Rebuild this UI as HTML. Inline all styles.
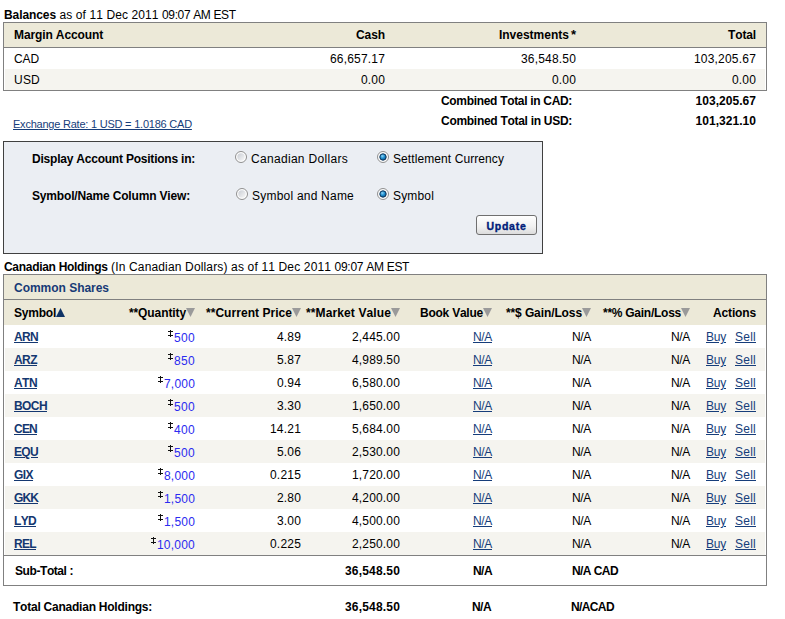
<!DOCTYPE html>
<html><head><meta charset="utf-8"><style>
html,body{margin:0;padding:0;background:#fff;width:785px;height:619px;overflow:hidden;position:relative}
body{font-family:"Liberation Sans",sans-serif;font-size:12px;color:#000;font-kerning:none}
.t{position:absolute;white-space:nowrap;line-height:14px;font-size:12px}
.b{position:absolute}
.lk{color:#163d7a}
.sym{color:#143770}
.cs{color:#173a76}
.q{color:#2b2bf0}
.dg{display:inline-block;vertical-align:5px;fill:#111}
.tri{display:inline-block;vertical-align:0px}
.btn{position:absolute;box-sizing:border-box;border:1px solid #6f6f6f;border-radius:3px;background:linear-gradient(#ffffff,#f0f0f0 60%,#dcdcdc);font:bold 10.5px/18px "Liberation Sans",sans-serif;padding-top:1px;color:#00207a;text-align:center;letter-spacing:0.75px;-webkit-text-stroke:0.35px #00207a}
</style></head><body>
<svg width="0" height="0" style="position:absolute"><defs>
<linearGradient id="rg" x1="0" y1="0" x2="1" y2="1"><stop offset="0" stop-color="#c9cdd4"/><stop offset="1" stop-color="#f8f8f8"/></linearGradient>
<radialGradient id="rd" cx="0.4" cy="0.35" r="0.7"><stop offset="0" stop-color="#8fd3f5"/><stop offset="0.5" stop-color="#1d8fd0"/><stop offset="1" stop-color="#0e4f86"/></radialGradient>
</defs></svg>
<div class="t" style="left:4px;top:8px;"><span style="letter-spacing:-0.086px;font-weight:bold;">Balances</span><span style="letter-spacing:0.104px;"> as of 11 Dec 2011 </span><span style="letter-spacing:-0.375px;">09:07 AM EST</span></div>
<div class="b" style="left:3px;top:22px;width:764px;height:69px;border:1px solid #808080;box-sizing:border-box;background:#fff"></div>
<div class="b" style="left:4px;top:23px;width:762px;height:24px;background:#ece9d8"></div>
<div class="b" style="left:4px;top:47px;width:762px;height:1px;background:#808080"></div>
<div class="b" style="left:5px;top:69px;width:760px;height:21px;background:#f5f4ef"></div>
<div class="t" style="left:14px;top:28px;"><span style="letter-spacing:-0.118px;font-weight:bold;">Margin Account</span></div>
<div class="t" style="right:400px;top:28px;"><span style="letter-spacing:-0.086px;font-weight:bold;">Cash</span></div>
<div class="t" style="right:209px;top:28px;"><span style="letter-spacing:-0.001px;font-weight:bold;">Investments</span><span style="font-weight:bold;font-size:13px;margin-left:2px">*</span></div>
<div class="t" style="right:29px;top:28px;"><span style="letter-spacing:-0.131px;font-weight:bold;">Total</span></div>
<div class="t" style="left:14px;top:52px;"><span style="letter-spacing:-0.115px;">CAD</span></div>
<div class="t" style="right:400px;top:52px;"><span style="letter-spacing:0.182px;">66,657.17</span></div>
<div class="t" style="right:209px;top:52px;"><span style="letter-spacing:0.182px;">36,548.50</span></div>
<div class="t" style="right:29px;top:52px;"><span style="letter-spacing:0.197px;">103,205.67</span></div>
<div class="t" style="left:14px;top:73px;"><span style="letter-spacing:0.219px;">USD</span></div>
<div class="t" style="right:400px;top:73px;"><span style="letter-spacing:0.164px;">0.00</span></div>
<div class="t" style="right:209px;top:73px;"><span style="letter-spacing:0.164px;">0.00</span></div>
<div class="t" style="right:29px;top:73px;"><span style="letter-spacing:0.164px;">0.00</span></div>
<div class="t" style="left:441px;top:94px;"><span style="letter-spacing:-0.317px;font-weight:bold;">Combined Total in CAD:</span></div>
<div class="t" style="right:29px;top:94px;"><span style="letter-spacing:0.047px;font-weight:bold;">103,205.67</span></div>
<div class="t" style="left:441px;top:114px;"><span style="letter-spacing:-0.286px;font-weight:bold;">Combined Total in USD:</span></div>
<div class="t" style="right:29px;top:114px;"><span style="letter-spacing:0.047px;font-weight:bold;">101,321.10</span></div>
<div class="t lk" style="left:13px;top:117px;"><u style="letter-spacing:-0.222px;font-size:11px;">Exchange Rate: 1 USD = 1.0186 CAD</u></div>
<div class="b" style="left:3px;top:141px;width:540px;height:113px;border:1px solid #404040;box-sizing:border-box;background:#ebeef3"></div>
<div class="t" style="left:32px;top:152px;"><span style="letter-spacing:-0.217px;font-weight:bold;">Display Account Positions in:</span></div>
<div class="t" style="left:32px;top:189px;"><span style="letter-spacing:-0.166px;font-weight:bold;">Symbol/Name Column View:</span></div>
<svg class="b" style="left:235px;top:151px" width="12" height="12" viewBox="0 0 12 12"><circle cx="6" cy="6" r="5.5" fill="#fdfdfd" stroke="#8f8f8f" stroke-width="1"/><circle cx="6" cy="6" r="3.7" fill="url(#rg)"/></svg>
<div class="t" style="left:251px;top:152px;"><span style="letter-spacing:0.309px;">Canadian Dollars</span></div>
<svg class="b" style="left:377px;top:151px" width="12" height="12" viewBox="0 0 12 12"><circle cx="6" cy="6" r="5.5" fill="#fdfdfd" stroke="#8f8f8f" stroke-width="1"/><circle cx="6" cy="6" r="3.2" fill="url(#rd)" stroke="#0d3257" stroke-width="1"/></svg>
<div class="t" style="left:393px;top:152px;"><span style="letter-spacing:0.086px;">Settlement Currency</span></div>
<svg class="b" style="left:236px;top:188px" width="12" height="12" viewBox="0 0 12 12"><circle cx="6" cy="6" r="5.5" fill="#fdfdfd" stroke="#8f8f8f" stroke-width="1"/><circle cx="6" cy="6" r="3.7" fill="url(#rg)"/></svg>
<div class="t" style="left:252px;top:189px;"><span style="letter-spacing:0.220px;">Symbol and Name</span></div>
<svg class="b" style="left:377px;top:188px" width="12" height="12" viewBox="0 0 12 12"><circle cx="6" cy="6" r="5.5" fill="#fdfdfd" stroke="#8f8f8f" stroke-width="1"/><circle cx="6" cy="6" r="3.2" fill="url(#rd)" stroke="#0d3257" stroke-width="1"/></svg>
<div class="t" style="left:393px;top:189px;"><span style="letter-spacing:0.164px;">Symbol</span></div>
<div class="btn" style="left:476px;top:215px;width:61px;height:20px">Update</div>
<div class="t" style="left:4px;top:260px;"><span style="letter-spacing:-0.302px;font-weight:bold;">Canadian Holdings</span><span style="letter-spacing:0.153px;"> (In Canadian Dollars) as of 11 Dec 2011 </span><span style="letter-spacing:-0.292px;">09:07 AM EST</span></div>
<div class="b" style="left:3px;top:274px;width:764px;height:312px;border:1px solid #808080;box-sizing:border-box;background:#fff"></div>
<div class="b" style="left:4px;top:275px;width:762px;height:24px;background:#ece9d8"></div>
<div class="b" style="left:4px;top:299px;width:762px;height:1px;background:#808080"></div>
<div class="b" style="left:4px;top:300px;width:762px;height:25px;background:#ece9d8"></div>
<div class="t cs" style="left:14px;top:281px;"><span style="letter-spacing:-0.026px;font-weight:bold;">Common Shares</span></div>
<div class="t" style="left:14px;top:306px;"><span style="letter-spacing:-0.221px;font-weight:bold;">Symbol</span><svg class="tri" width="9" height="9" viewBox="0 0 9 9"><path d="M0 9H9L4.5 0Z" fill="#0f3366"/></svg></div>
<div class="t" style="right:590px;top:306px;"><span style="letter-spacing:-0.100px;font-weight:bold;">**Quantity</span><svg class="tri" width="9" height="9" viewBox="0 0 9 9"><path d="M0 0H9L4.5 9Z" fill="#9a9a9a"/></svg></div>
<div class="t" style="right:484px;top:306px;"><span style="letter-spacing:0.043px;font-weight:bold;">**Current Price</span><svg class="tri" width="9" height="9" viewBox="0 0 9 9"><path d="M0 0H9L4.5 9Z" fill="#9a9a9a"/></svg></div>
<div class="t" style="right:385px;top:306px;"><span style="letter-spacing:0.117px;font-weight:bold;">**Market Value</span><svg class="tri" width="9" height="9" viewBox="0 0 9 9"><path d="M0 0H9L4.5 9Z" fill="#9a9a9a"/></svg></div>
<div class="t" style="right:293px;top:306px;"><span style="letter-spacing:-0.233px;font-weight:bold;">Book Value</span><svg class="tri" width="9" height="9" viewBox="0 0 9 9"><path d="M0 0H9L4.5 9Z" fill="#9a9a9a"/></svg></div>
<div class="t" style="right:194px;top:306px;"><span style="letter-spacing:-0.102px;font-weight:bold;">**$ Gain/Loss</span><svg class="tri" width="9" height="9" viewBox="0 0 9 9"><path d="M0 0H9L4.5 9Z" fill="#9a9a9a"/></svg></div>
<div class="t" style="right:95px;top:306px;"><span style="letter-spacing:-0.256px;font-weight:bold;">**% Gain/Loss</span><svg class="tri" width="9" height="9" viewBox="0 0 9 9"><path d="M0 0H9L4.5 9Z" fill="#9a9a9a"/></svg></div>
<div class="t" style="right:29px;top:306px;"><span style="letter-spacing:-0.143px;font-weight:bold;">Actions</span></div>
<div class="t sym" style="left:14px;top:330px;"><u style="letter-spacing:-0.672px;font-weight:bold;">ARN</u></div>
<div class="t" style="right:590px;top:330px;"><svg class="dg" width="6" height="7" viewBox="0 0 6 7"><rect x="2" y="0" width="1" height="7"/><rect x="0" y="1" width="5" height="1"/><rect x="0" y="5" width="5" height="1"/></svg><span class="q" style="letter-spacing:0.328px;">500</span></div>
<div class="t" style="right:484px;top:330px;"><span style="letter-spacing:0.164px;">4.89</span></div>
<div class="t" style="right:385px;top:330px;"><span style="letter-spacing:0.164px;">2,445.00</span></div>
<div class="t lk" style="right:293px;top:330px;"><u style="letter-spacing:-0.333px;">N/A</u></div>
<div class="t" style="right:194px;top:330px;"><span style="letter-spacing:-0.333px;">N/A</span></div>
<div class="t" style="right:95px;top:330px;"><span style="letter-spacing:-0.333px;">N/A</span></div>
<div class="t lk" style="left:706px;top:330px;"><u style="letter-spacing:-0.224px;">Buy</u></div>
<div class="t lk" style="right:29px;top:330px;"><u style="letter-spacing:0.246px;">Sell</u></div>
<div class="b" style="left:5px;top:348px;width:760px;height:23px;background:#f5f4ef"></div>
<div class="t sym" style="left:14px;top:353px;"><u style="letter-spacing:-0.557px;font-weight:bold;">ARZ</u></div>
<div class="t" style="right:590px;top:353px;"><svg class="dg" width="6" height="7" viewBox="0 0 6 7"><rect x="2" y="0" width="1" height="7"/><rect x="0" y="1" width="5" height="1"/><rect x="0" y="5" width="5" height="1"/></svg><span class="q" style="letter-spacing:0.328px;">850</span></div>
<div class="t" style="right:484px;top:353px;"><span style="letter-spacing:0.164px;">5.87</span></div>
<div class="t" style="right:385px;top:353px;"><span style="letter-spacing:0.164px;">4,989.50</span></div>
<div class="t lk" style="right:293px;top:353px;"><u style="letter-spacing:-0.333px;">N/A</u></div>
<div class="t" style="right:194px;top:353px;"><span style="letter-spacing:-0.333px;">N/A</span></div>
<div class="t" style="right:95px;top:353px;"><span style="letter-spacing:-0.333px;">N/A</span></div>
<div class="t lk" style="left:706px;top:353px;"><u style="letter-spacing:-0.224px;">Buy</u></div>
<div class="t lk" style="right:29px;top:353px;"><u style="letter-spacing:0.246px;">Sell</u></div>
<div class="t sym" style="left:14px;top:376px;"><u style="letter-spacing:-0.557px;font-weight:bold;">ATN</u></div>
<div class="t" style="right:590px;top:376px;"><svg class="dg" width="6" height="7" viewBox="0 0 6 7"><rect x="2" y="0" width="1" height="7"/><rect x="0" y="1" width="5" height="1"/><rect x="0" y="5" width="5" height="1"/></svg><span class="q" style="letter-spacing:0.197px;">7,000</span></div>
<div class="t" style="right:484px;top:376px;"><span style="letter-spacing:0.164px;">0.94</span></div>
<div class="t" style="right:385px;top:376px;"><span style="letter-spacing:0.164px;">6,580.00</span></div>
<div class="t lk" style="right:293px;top:376px;"><u style="letter-spacing:-0.333px;">N/A</u></div>
<div class="t" style="right:194px;top:376px;"><span style="letter-spacing:-0.333px;">N/A</span></div>
<div class="t" style="right:95px;top:376px;"><span style="letter-spacing:-0.333px;">N/A</span></div>
<div class="t lk" style="left:706px;top:376px;"><u style="letter-spacing:-0.224px;">Buy</u></div>
<div class="t lk" style="right:29px;top:376px;"><u style="letter-spacing:0.246px;">Sell</u></div>
<div class="b" style="left:5px;top:394px;width:760px;height:23px;background:#f5f4ef"></div>
<div class="t sym" style="left:14px;top:399px;"><u style="letter-spacing:-0.586px;font-weight:bold;">BOCH</u></div>
<div class="t" style="right:590px;top:399px;"><svg class="dg" width="6" height="7" viewBox="0 0 6 7"><rect x="2" y="0" width="1" height="7"/><rect x="0" y="1" width="5" height="1"/><rect x="0" y="5" width="5" height="1"/></svg><span class="q" style="letter-spacing:0.328px;">500</span></div>
<div class="t" style="right:484px;top:399px;"><span style="letter-spacing:0.164px;">3.30</span></div>
<div class="t" style="right:385px;top:399px;"><span style="letter-spacing:0.164px;">1,650.00</span></div>
<div class="t lk" style="right:293px;top:399px;"><u style="letter-spacing:-0.333px;">N/A</u></div>
<div class="t" style="right:194px;top:399px;"><span style="letter-spacing:-0.333px;">N/A</span></div>
<div class="t" style="right:95px;top:399px;"><span style="letter-spacing:-0.333px;">N/A</span></div>
<div class="t lk" style="left:706px;top:399px;"><u style="letter-spacing:-0.224px;">Buy</u></div>
<div class="t lk" style="right:29px;top:399px;"><u style="letter-spacing:0.246px;">Sell</u></div>
<div class="t sym" style="left:14px;top:422px;"><u style="letter-spacing:-0.781px;font-weight:bold;">CEN</u></div>
<div class="t" style="right:590px;top:422px;"><svg class="dg" width="6" height="7" viewBox="0 0 6 7"><rect x="2" y="0" width="1" height="7"/><rect x="0" y="1" width="5" height="1"/><rect x="0" y="5" width="5" height="1"/></svg><span class="q" style="letter-spacing:0.328px;">400</span></div>
<div class="t" style="right:484px;top:422px;"><span style="letter-spacing:0.197px;">14.21</span></div>
<div class="t" style="right:385px;top:422px;"><span style="letter-spacing:0.164px;">5,684.00</span></div>
<div class="t lk" style="right:293px;top:422px;"><u style="letter-spacing:-0.333px;">N/A</u></div>
<div class="t" style="right:194px;top:422px;"><span style="letter-spacing:-0.333px;">N/A</span></div>
<div class="t" style="right:95px;top:422px;"><span style="letter-spacing:-0.333px;">N/A</span></div>
<div class="t lk" style="left:706px;top:422px;"><u style="letter-spacing:-0.224px;">Buy</u></div>
<div class="t lk" style="right:29px;top:422px;"><u style="letter-spacing:0.246px;">Sell</u></div>
<div class="b" style="left:5px;top:440px;width:760px;height:23px;background:#f5f4ef"></div>
<div class="t sym" style="left:14px;top:445px;"><u style="letter-spacing:-0.667px;font-weight:bold;">EQU</u></div>
<div class="t" style="right:590px;top:445px;"><svg class="dg" width="6" height="7" viewBox="0 0 6 7"><rect x="2" y="0" width="1" height="7"/><rect x="0" y="1" width="5" height="1"/><rect x="0" y="5" width="5" height="1"/></svg><span class="q" style="letter-spacing:0.328px;">500</span></div>
<div class="t" style="right:484px;top:445px;"><span style="letter-spacing:0.164px;">5.06</span></div>
<div class="t" style="right:385px;top:445px;"><span style="letter-spacing:0.164px;">2,530.00</span></div>
<div class="t lk" style="right:293px;top:445px;"><u style="letter-spacing:-0.333px;">N/A</u></div>
<div class="t" style="right:194px;top:445px;"><span style="letter-spacing:-0.333px;">N/A</span></div>
<div class="t" style="right:95px;top:445px;"><span style="letter-spacing:-0.333px;">N/A</span></div>
<div class="t lk" style="left:706px;top:445px;"><u style="letter-spacing:-0.224px;">Buy</u></div>
<div class="t lk" style="right:29px;top:445px;"><u style="letter-spacing:0.246px;">Sell</u></div>
<div class="t sym" style="left:14px;top:468px;"><u style="letter-spacing:-0.552px;font-weight:bold;">GIX</u></div>
<div class="t" style="right:590px;top:468px;"><svg class="dg" width="6" height="7" viewBox="0 0 6 7"><rect x="2" y="0" width="1" height="7"/><rect x="0" y="1" width="5" height="1"/><rect x="0" y="5" width="5" height="1"/></svg><span class="q" style="letter-spacing:0.197px;">8,000</span></div>
<div class="t" style="right:484px;top:468px;"><span style="letter-spacing:0.197px;">0.215</span></div>
<div class="t" style="right:385px;top:468px;"><span style="letter-spacing:0.164px;">1,720.00</span></div>
<div class="t lk" style="right:293px;top:468px;"><u style="letter-spacing:-0.333px;">N/A</u></div>
<div class="t" style="right:194px;top:468px;"><span style="letter-spacing:-0.333px;">N/A</span></div>
<div class="t" style="right:95px;top:468px;"><span style="letter-spacing:-0.333px;">N/A</span></div>
<div class="t lk" style="left:706px;top:468px;"><u style="letter-spacing:-0.224px;">Buy</u></div>
<div class="t lk" style="right:29px;top:468px;"><u style="letter-spacing:0.246px;">Sell</u></div>
<div class="b" style="left:5px;top:486px;width:760px;height:23px;background:#f5f4ef"></div>
<div class="t sym" style="left:14px;top:491px;"><u style="letter-spacing:-0.891px;font-weight:bold;">GKK</u></div>
<div class="t" style="right:590px;top:491px;"><svg class="dg" width="6" height="7" viewBox="0 0 6 7"><rect x="2" y="0" width="1" height="7"/><rect x="0" y="1" width="5" height="1"/><rect x="0" y="5" width="5" height="1"/></svg><span class="q" style="letter-spacing:0.197px;">1,500</span></div>
<div class="t" style="right:484px;top:491px;"><span style="letter-spacing:0.164px;">2.80</span></div>
<div class="t" style="right:385px;top:491px;"><span style="letter-spacing:0.164px;">4,200.00</span></div>
<div class="t lk" style="right:293px;top:491px;"><u style="letter-spacing:-0.333px;">N/A</u></div>
<div class="t" style="right:194px;top:491px;"><span style="letter-spacing:-0.333px;">N/A</span></div>
<div class="t" style="right:95px;top:491px;"><span style="letter-spacing:-0.333px;">N/A</span></div>
<div class="t lk" style="left:706px;top:491px;"><u style="letter-spacing:-0.224px;">Buy</u></div>
<div class="t lk" style="right:29px;top:491px;"><u style="letter-spacing:0.246px;">Sell</u></div>
<div class="t sym" style="left:14px;top:514px;"><u style="letter-spacing:-0.667px;font-weight:bold;">LYD</u></div>
<div class="t" style="right:590px;top:514px;"><svg class="dg" width="6" height="7" viewBox="0 0 6 7"><rect x="2" y="0" width="1" height="7"/><rect x="0" y="1" width="5" height="1"/><rect x="0" y="5" width="5" height="1"/></svg><span class="q" style="letter-spacing:0.197px;">1,500</span></div>
<div class="t" style="right:484px;top:514px;"><span style="letter-spacing:0.164px;">3.00</span></div>
<div class="t" style="right:385px;top:514px;"><span style="letter-spacing:0.164px;">4,500.00</span></div>
<div class="t lk" style="right:293px;top:514px;"><u style="letter-spacing:-0.333px;">N/A</u></div>
<div class="t" style="right:194px;top:514px;"><span style="letter-spacing:-0.333px;">N/A</span></div>
<div class="t" style="right:95px;top:514px;"><span style="letter-spacing:-0.333px;">N/A</span></div>
<div class="t lk" style="left:706px;top:514px;"><u style="letter-spacing:-0.224px;">Buy</u></div>
<div class="t lk" style="right:29px;top:514px;"><u style="letter-spacing:0.246px;">Sell</u></div>
<div class="b" style="left:5px;top:532px;width:760px;height:23px;background:#f5f4ef"></div>
<div class="t sym" style="left:14px;top:537px;"><u style="letter-spacing:-0.667px;font-weight:bold;">REL</u></div>
<div class="t" style="right:590px;top:537px;"><svg class="dg" width="6" height="7" viewBox="0 0 6 7"><rect x="2" y="0" width="1" height="7"/><rect x="0" y="1" width="5" height="1"/><rect x="0" y="5" width="5" height="1"/></svg><span class="q" style="letter-spacing:0.219px;">10,000</span></div>
<div class="t" style="right:484px;top:537px;"><span style="letter-spacing:0.197px;">0.225</span></div>
<div class="t" style="right:385px;top:537px;"><span style="letter-spacing:0.164px;">2,250.00</span></div>
<div class="t lk" style="right:293px;top:537px;"><u style="letter-spacing:-0.333px;">N/A</u></div>
<div class="t" style="right:194px;top:537px;"><span style="letter-spacing:-0.333px;">N/A</span></div>
<div class="t" style="right:95px;top:537px;"><span style="letter-spacing:-0.333px;">N/A</span></div>
<div class="t lk" style="left:706px;top:537px;"><u style="letter-spacing:-0.224px;">Buy</u></div>
<div class="t lk" style="right:29px;top:537px;"><u style="letter-spacing:0.246px;">Sell</u></div>
<div class="b" style="left:4px;top:555px;width:762px;height:1px;background:#808080"></div>
<div class="t" style="left:15px;top:564px;"><span style="letter-spacing:-0.422px;font-weight:bold;">Sub-Total :</span></div>
<div class="t" style="right:385px;top:564px;"><span style="letter-spacing:0.182px;font-weight:bold;">36,548.50</span></div>
<div class="t" style="left:473px;top:564px;"><span style="letter-spacing:-0.557px;font-weight:bold;">N/A</span></div>
<div class="t" style="left:572px;top:564px;"><span style="letter-spacing:-0.574px;font-weight:bold;">N/A CAD</span></div>
<div class="t" style="left:13px;top:600px;"><span style="letter-spacing:-0.234px;font-weight:bold;">Total Canadian Holdings:</span></div>
<div class="t" style="right:385px;top:600px;"><span style="letter-spacing:0.182px;font-weight:bold;">36,548.50</span></div>
<div class="t" style="left:472px;top:600px;"><span style="letter-spacing:-0.557px;font-weight:bold;">N/A</span></div>
<div class="t" style="left:571px;top:600px;"><span style="letter-spacing:-0.615px;font-weight:bold;">N/ACAD</span></div>
</body></html>
